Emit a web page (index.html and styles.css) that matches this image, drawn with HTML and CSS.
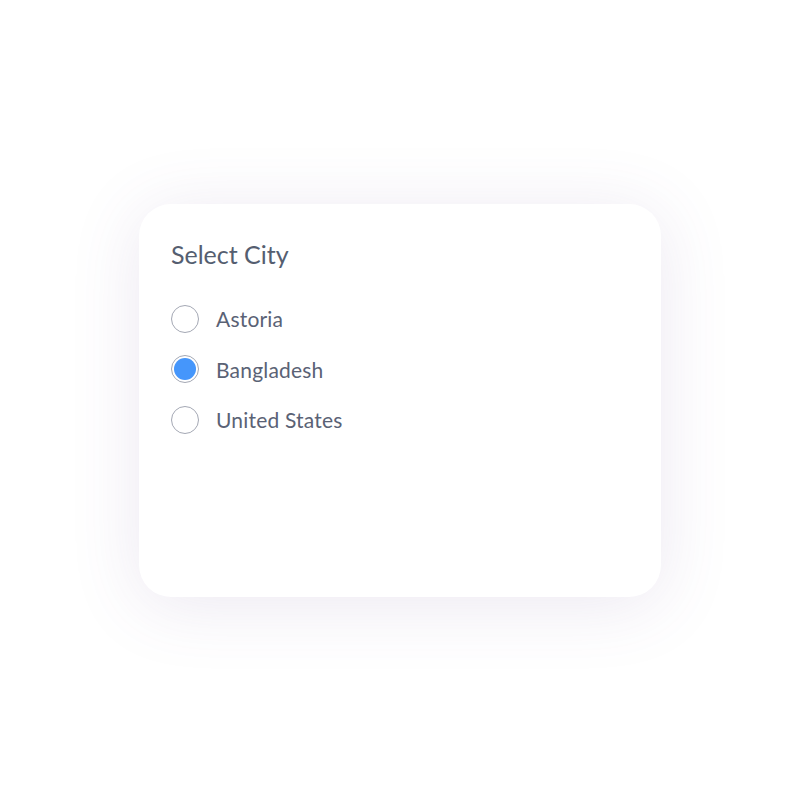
FILE: index.html
```html
<!DOCTYPE html>
<html lang="en">
<head>
	<meta charset="UTF-8">
	<title>Select City</title>
	<link rel="stylesheet" href="styles.css">
</head>
<body>
<div class="wrap">
	<div class="card">
		<h2 class="title">Select City</h2>
		<ul class="list">
			<li><label><input type="radio" name="city"><span class="dot"></span>Astoria</label></li>
			<li><label><input type="radio" name="city" checked><span class="dot"></span>Bangladesh</label></li>
			<li><label><input type="radio" name="city"><span class="dot"></span>United States</label></li>
		</ul>
	</div>
</div>
</body>
</html>
```

FILE: styles.css
```css
*{
	margin: 0;
	padding: 0;
	box-sizing: border-box;
}
body{
	background: #fff;
	font-family: 'Lato', 'Noto Sans', sans-serif;
	color: #5a6275;
}
.wrap{
	width: 800px;
	height: 800px;
	display: flex;
	align-items: center;
	justify-content: center;
}
.card{
	width: 522px;
	height: 393px;
	background: #fff;
	border-radius: 32px;
	padding: 35px 32px 0;
	box-shadow: 0 8px 70px rgba(110, 80, 150, 0.13);
}
.title{
	font-size: 25px;
	font-weight: 400;
	line-height: 30px;
	color: #555e70;
}
.list{
	list-style: none;
	margin-top: 25px;
}
.list li{
	height: 50.5px;
	display: flex;
	align-items: center;
}
.list label{
	display: flex;
	align-items: center;
	font-size: 21px;
	letter-spacing: 0.2px;
	cursor: pointer;
}
.list input{
	display: none;
}
.dot{
	width: 28px;
	height: 28px;
	border-radius: 50%;
	border: 1px solid #a4a8b4;
	margin-right: 17px;
	padding: 2px;
	background-clip: content-box;
}
.list input:checked + .dot{
	background-color: #4596fb;
}
```
